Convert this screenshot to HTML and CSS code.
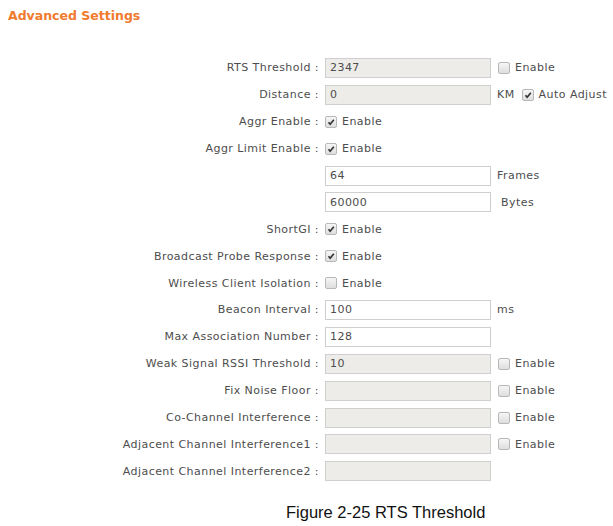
FILE: index.html
```html
<!DOCTYPE html>
<html lang="en">
  <head>
    <meta charset="UTF-8" />
    <title>Advanced Settings</title>
    <link rel="stylesheet" href="styles.css">
  </head>
  <body>
    <h1 class="title">Advanced Settings</h1>

    <div class="form">
      <div class="row">
        <span class="label">RTS Threshold :</span>
        <input class="field off" type="text" value="2347" />
        <label class="check"><span class="box"></span>Enable</label>
      </div>
      <div class="row">
        <span class="label">Distance :</span>
        <input class="field off" type="text" value="0" />
        <span class="unit">KM</span>
        <label class="check tight"><span class="box on"><svg viewBox="0 0 12 12"><path d="M3 6.2 L5 8.6 L9.4 3.2" /></svg></span>Auto Adjust</label>
      </div>
      <div class="row">
        <span class="label">Aggr Enable :</span>
        <label class="check first"><span class="box on"><svg viewBox="0 0 12 12"><path d="M3 6.2 L5 8.6 L9.4 3.2" /></svg></span>Enable</label>
      </div>
      <div class="row">
        <span class="label">Aggr Limit Enable :</span>
        <label class="check first"><span class="box on"><svg viewBox="0 0 12 12"><path d="M3 6.2 L5 8.6 L9.4 3.2" /></svg></span>Enable</label>
      </div>
      <div class="row">
        <span class="label"></span>
        <input class="field" type="text" value="64" />
        <span class="unit">Frames</span>
      </div>
      <div class="row">
        <span class="label"></span>
        <input class="field" type="text" value="60000" />
        <span class="unit indent">Bytes</span>
      </div>
      <div class="row">
        <span class="label">ShortGI :</span>
        <label class="check first"><span class="box on"><svg viewBox="0 0 12 12"><path d="M3 6.2 L5 8.6 L9.4 3.2" /></svg></span>Enable</label>
      </div>
      <div class="row">
        <span class="label">Broadcast Probe Response :</span>
        <label class="check first"><span class="box on"><svg viewBox="0 0 12 12"><path d="M3 6.2 L5 8.6 L9.4 3.2" /></svg></span>Enable</label>
      </div>
      <div class="row">
        <span class="label">Wireless Client Isolation :</span>
        <label class="check first"><span class="box"></span>Enable</label>
      </div>
      <div class="row">
        <span class="label">Beacon Interval :</span>
        <input class="field" type="text" value="100" />
        <span class="unit">ms</span>
      </div>
      <div class="row">
        <span class="label">Max Association Number :</span>
        <input class="field" type="text" value="128" />
      </div>
      <div class="row">
        <span class="label">Weak Signal RSSI Threshold :</span>
        <input class="field off" type="text" value="10" />
        <label class="check"><span class="box"></span>Enable</label>
      </div>
      <div class="row">
        <span class="label">Fix Noise Floor :</span>
        <input class="field off" type="text" value="" />
        <label class="check"><span class="box"></span>Enable</label>
      </div>
      <div class="row">
        <span class="label">Co-Channel Interference :</span>
        <input class="field off" type="text" value="" />
        <label class="check"><span class="box"></span>Enable</label>
      </div>
      <div class="row">
        <span class="label">Adjacent Channel Interference1 :</span>
        <input class="field off" type="text" value="" />
        <label class="check"><span class="box"></span>Enable</label>
      </div>
      <div class="row">
        <span class="label">Adjacent Channel Interference2 :</span>
        <input class="field off" type="text" value="" />
      </div>
    </div>

    <p class="caption">Figure 2-25 RTS Threshold</p>
  </body>
</html>
```

FILE: styles.css
```css
body {
  margin: 0;
  background-color: #ffffff;
  font-family: "DejaVu Sans", Verdana, sans-serif;
  font-size: 11px;
  color: #4d4d4d;
}

.title {
  margin: 0;
  padding: 8px 0 0 8px;
  height: 54.5px;
  box-sizing: border-box;
  font-size: 12.5px;
  font-weight: bold;
  color: #f07a2e;
}

.form {
  display: flex;
  flex-direction: column;
}

.row {
  display: flex;
  align-items: center;
  height: 26.9px;
  letter-spacing: 0.45px;
}

.label {
  width: 325px;
  flex: none;
  text-align: right;
  padding-right: 6px;
  box-sizing: border-box;
  white-space: nowrap;
}

.field {
  width: 166px;
  height: 20px;
  box-sizing: border-box;
  margin: 0;
  padding: 0 4px;
  border: 1px solid #cfcfcf;
  background-color: #ffffff;
  font-family: "DejaVu Sans", Verdana, sans-serif;
  font-size: 11px;
  letter-spacing: 0.45px;
  color: #4d4d4d;
  outline: none;
}

.field.off {
  background-color: #edece8;
}

.unit {
  margin-left: 6px;
}

.unit.indent {
  margin-left: 10px;
}

.check {
  display: flex;
  align-items: center;
  margin-left: 7px;
}

.check.first {
  margin-left: 0;
}

.check.tight {
  margin-left: 7px;
}

.box {
  width: 10px;
  height: 10px;
  margin-right: 5px;
  border: 1px solid #b8b8b8;
  border-radius: 2px;
  background: linear-gradient(#f6f6f6, #dedede);
  display: flex;
  align-items: center;
  justify-content: center;
}

.box svg {
  width: 10px;
  height: 10px;
}

.box path {
  fill: none;
  stroke: #333333;
  stroke-width: 2;
}

.caption {
  margin: 18px 0 0 286px;
  font-family: "Liberation Sans", Arial, sans-serif;
  font-size: 16.5px;
  color: #111111;
}
```
